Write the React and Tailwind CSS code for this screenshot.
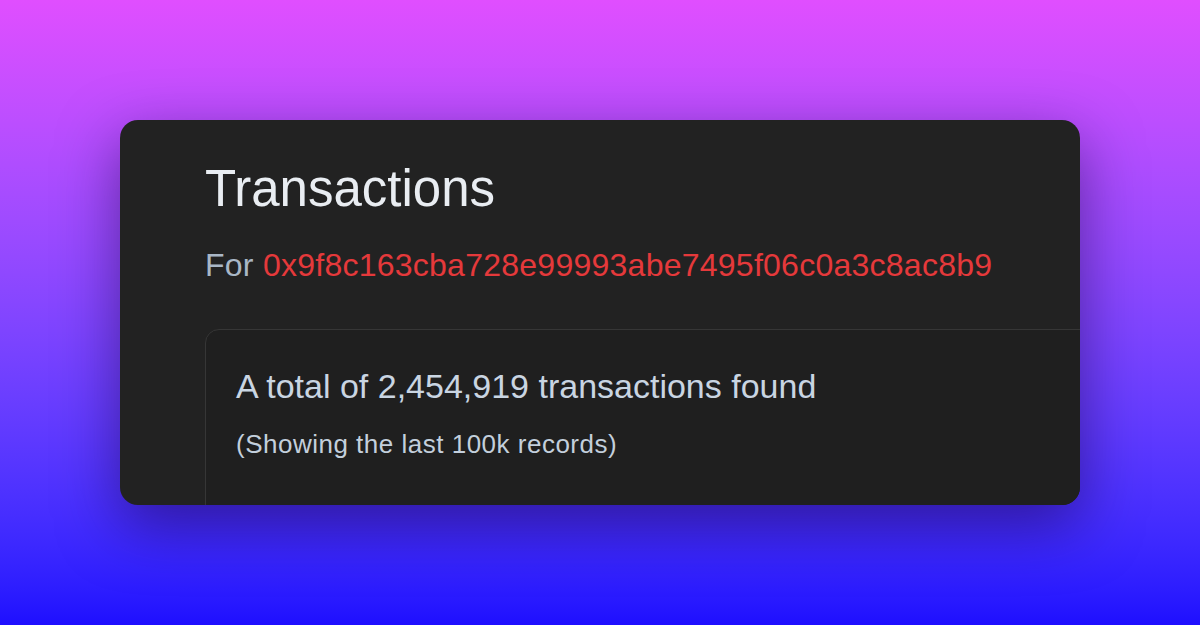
import React from 'react';

const App = () => {
  return (
    <div className="w-[1200px] h-[625px] overflow-hidden bg-linear-to-b from-[#e04eff] to-[#1e0eff] pt-[120px] pl-[120px] font-['Liberation_Sans',Arial,sans-serif]">
      <div className="w-[960px] h-[385px] overflow-hidden rounded-[18px] bg-[#222222] pl-[85px] pt-[39px] shadow-[0_20px_60px_rgba(20,0,60,0.5)]">
        <h1 className="text-[51px] leading-[60px] text-[#e9edf2]">Transactions</h1>

        <p className="mt-[26px] text-[32px] leading-[40px] tracking-[0.25px] text-[#a9b7c6]">
          For <span className="text-[#e5393b]">0x9f8c163cba728e99993abe7495f06c0a3c8ac8b9</span>
        </p>

        <div className="mt-[44px] w-[1000px] h-[300px] rounded-[14px] border border-[#363636] bg-[#1f1f1f] pl-[30px] pt-[35px]">
          <p className="text-[34px] leading-[42px] text-[#c9d5e2]">A total of 2,454,919 transactions found</p>
          <p className="mt-[20px] text-[26px] leading-[34px] tracking-[0.5px] text-[#c3cfdc]">(Showing the last 100k records)</p>
        </div>
      </div>
    </div>
  );
};

export default App;
